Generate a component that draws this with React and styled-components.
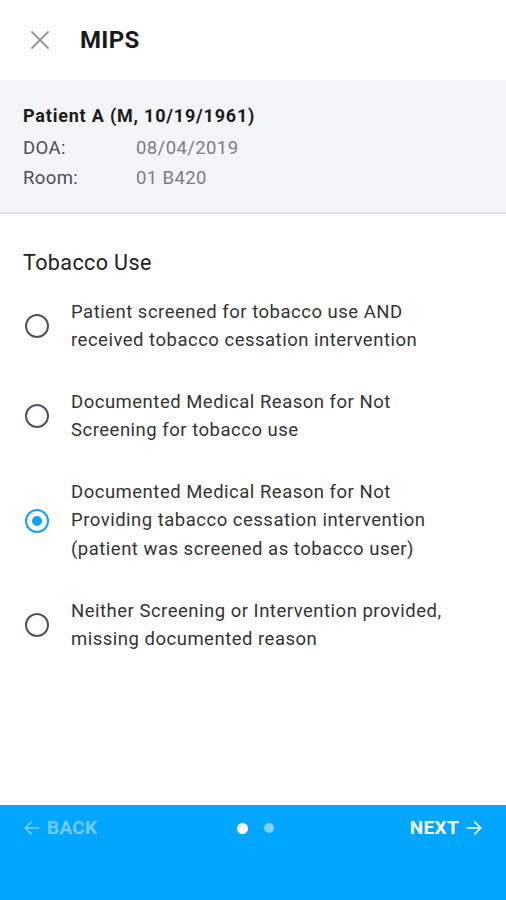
import React from 'react'
import styled, { createGlobalStyle } from 'styled-components'

const Global = createGlobalStyle`
    html, body {
        margin: 0;
        padding: 0;
        background: #fff;
        font-family: Roboto, 'Noto Sans', sans-serif;
    }
`

const Page = styled.div`
    width: 506px;
    height: 900px;
    display: flex;
    flex-direction: column;
    background: #fff;
`

const Header = styled.div`
    height: 80px;
    display: flex;
    align-items: center;
    padding-left: 28px;
    box-sizing: border-box;
`

const Close = styled.div`
    width: 24px;
    height: 24px;
    display: flex;
    align-items: center;
    justify-content: center;
    margin-right: 28px;
`

const Title = styled.h1`
    margin: 0;
    font-size: 24px;
    font-weight: 700;
    color: #1a1a1a;
    letter-spacing: 0.3px;
`

const Patient = styled.div`
    background: #f4f5f8;
    border-bottom: 2px solid #e1e3e7;
    padding: 21px 23px 18px;
    height: 134px;
    box-sizing: border-box;
`

const PatientName = styled.div`
    font-size: 18px;
    font-weight: 700;
    color: #1c1c1c;
    line-height: 30px;
    letter-spacing: 0.8px;
    margin-bottom: 2px;
`

const InfoRow = styled.div`
    display: flex;
    font-size: 18.5px;
    line-height: 30px;
    letter-spacing: 0.4px;
`

const InfoLabel = styled.span`
    width: 113px;
    color: #4a4f57;
`

const InfoValue = styled.span`
    color: #7a7e85;
`

const Body = styled.div`
    flex: 1;
    padding: 35px 23px 0 23px;
`

const SectionTitle = styled.div`
    font-size: 21.5px;
    color: #222;
    line-height: 28px;
    letter-spacing: 0.4px;
    margin-bottom: 21px;
`

const Options = styled.div`
    display: flex;
    flex-direction: column;
    gap: 33.5px;
`

const Option = styled.div`
    display: flex;
    align-items: center;
`

const Radio = styled.div`
    width: 20px;
    height: 20px;
    border-radius: 50%;
    border: 2px solid ${p => (p.$checked ? '#14a1f5' : '#4c5561')};
    display: flex;
    align-items: center;
    justify-content: center;
    flex-shrink: 0;
    margin-left: 2px;
    margin-right: 22px;

    &::after {
        content: '';
        width: 10px;
        height: 10px;
        border-radius: 50%;
        background: #14a1f5;
        display: ${p => (p.$checked ? 'block' : 'none')};
    }
`

const OptionText = styled.div`
    font-size: 18.5px;
    line-height: 28.3px;
    color: #333;
    letter-spacing: 0.5px;
`

const Footer = styled.div`
    height: 95px;
    background: #00a6ff;
    display: flex;
    align-items: flex-start;
    justify-content: space-between;
    padding: 12px 22px 0 22px;
    box-sizing: border-box;
`

const NavButton = styled.div`
    display: flex;
    align-items: center;
    gap: 5px;
    font-size: 19px;
    font-weight: 700;
    line-height: 22px;
    letter-spacing: 0.3px;
    color: ${p => (p.$disabled ? 'rgba(255,255,255,0.45)' : '#fff')};
    width: 110px;
    justify-content: ${p => (p.$right ? 'flex-end' : 'flex-start')};
`

const Dots = styled.div`
    display: flex;
    align-items: center;
    gap: 16px;
    height: 22px;
    margin-left: 4px;
`

const Dot = styled.div`
    width: ${p => (p.$active ? 11 : 10)}px;
    height: ${p => (p.$active ? 11 : 10)}px;
    border-radius: 50%;
    background: ${p => (p.$active ? '#fff' : 'rgba(255,255,255,0.5)')};
`

const Arrow = ({ left }) => (
    <svg width="20" height="20" viewBox="0 0 24 24" fill="none" stroke="currentColor" strokeWidth="2" strokeLinecap="round" strokeLinejoin="round">
        {left ? (
            <>
                <path d="M20 12H4" />
                <path d="M11 5l-7 7 7 7" />
            </>
        ) : (
            <>
                <path d="M4 12h16" />
                <path d="M13 5l7 7-7 7" />
            </>
        )}
    </svg>
)

const lines = [
    ['Patient screened for tobacco use AND', 'received tobacco cessation intervention'],
    ['Documented Medical Reason for Not', 'Screening for tobacco use'],
    ['Documented Medical Reason for Not', 'Providing tabacco cessation intervention', '(patient was screened as tobacco user)'],
    ['Neither Screening or Intervention provided,', 'missing documented reason']
]

export default function App() {
    return (
        <Page>
            <Global />
            <Header>
                <Close>
                    <svg width="20" height="20" viewBox="0 0 20 20" stroke="#9a9a9a" strokeWidth="2" strokeLinecap="round">
                        <path d="M2 2l16 16M18 2L2 18" />
                    </svg>
                </Close>
                <Title>MIPS</Title>
            </Header>

            <Patient>
                <PatientName>Patient A (M, 10/19/1961)</PatientName>
                <InfoRow>
                    <InfoLabel>DOA:</InfoLabel>
                    <InfoValue>08/04/2019</InfoValue>
                </InfoRow>
                <InfoRow>
                    <InfoLabel>Room:</InfoLabel>
                    <InfoValue>01 B420</InfoValue>
                </InfoRow>
            </Patient>

            <Body>
                <SectionTitle>Tobacco Use</SectionTitle>
                <Options>
                    {lines.map((o, i) => (
                        <Option key={i}>
                            <Radio $checked={i === 2} />
                            <OptionText>
                                {o.map((l, j) => (
                                    <div key={j}>{l}</div>
                                ))}
                            </OptionText>
                        </Option>
                    ))}
                </Options>
            </Body>

            <Footer>
                <NavButton $disabled>
                    <Arrow left />
                    BACK
                </NavButton>
                <Dots>
                    <Dot $active />
                    <Dot />
                </Dots>
                <NavButton $right>
                    NEXT
                    <Arrow />
                </NavButton>
            </Footer>
        </Page>
    )
}
